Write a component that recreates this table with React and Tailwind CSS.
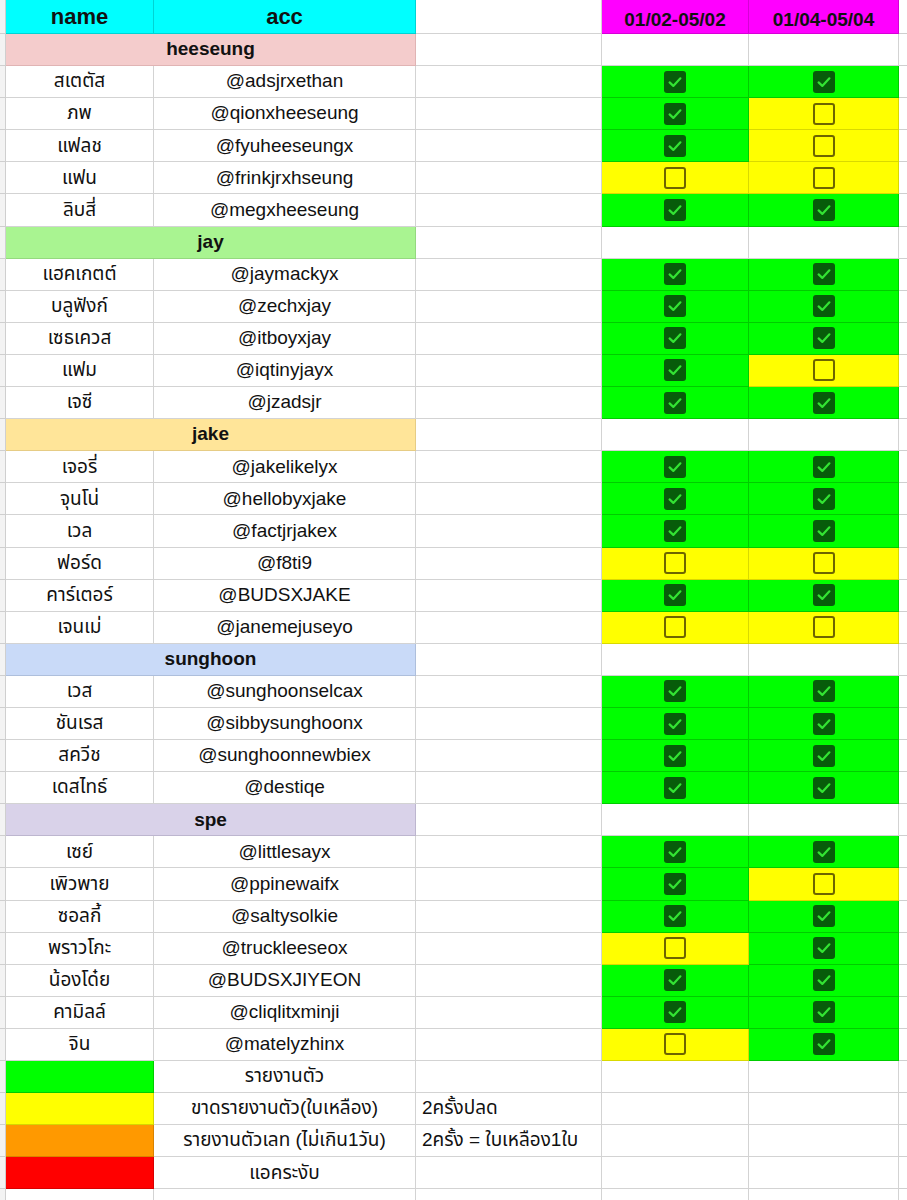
import React from 'react';

const groups = [
  {
    name: 'heeseung',
    bg: 'bg-[#f4cccc]',
    border: 'border-[#e0b4b4]',
    members: [
      ['สเตตัส', '@adsjrxethan', 1, 1],
      ['ภพ', '@qionxheeseung', 1, 0],
      ['แฟลช', '@fyuheeseungx', 1, 0],
      ['แฟน', '@frinkjrxhseung', 0, 0],
      ['ลิบสี่', '@megxheeseung', 1, 1],
    ],
  },
  {
    name: 'jay',
    bg: 'bg-[#a9f491]',
    border: 'border-[#94d97f]',
    members: [
      ['แฮคเกตต์', '@jaymackyx', 1, 1],
      ['บลูฟังก์', '@zechxjay', 1, 1],
      ['เซธเควส', '@itboyxjay', 1, 1],
      ['แฟม', '@iqtinyjayx', 1, 0],
      ['เจซี', '@jzadsjr', 1, 1],
    ],
  },
  {
    name: 'jake',
    bg: 'bg-[#ffe599]',
    border: 'border-[#e6cc85]',
    members: [
      ['เจอรี่', '@jakelikelyx', 1, 1],
      ['จุนโน่', '@hellobyxjake', 1, 1],
      ['เวล', '@factjrjakex', 1, 1],
      ['ฟอร์ด', '@f8ti9', 0, 0],
      ['คาร์เตอร์', '@BUDSXJAKE', 1, 1],
      ['เจนเม่', '@janemejuseyo', 0, 0],
    ],
  },
  {
    name: 'sunghoon',
    bg: 'bg-[#c9daf8]',
    border: 'border-[#aebfdc]',
    members: [
      ['เวส', '@sunghoonselcax', 1, 1],
      ['ชันเรส', '@sibbysunghoonx', 1, 1],
      ['สควีช', '@sunghoonnewbiex', 1, 1],
      ['เดสไทธ์', '@destiqe', 1, 1],
    ],
  },
  {
    name: 'spe',
    bg: 'bg-[#d9d2e9]',
    border: 'border-[#bdb6cf]',
    members: [
      ['เซย์', '@littlesayx', 1, 1],
      ['เพิวพาย', '@ppinewaifx', 1, 0],
      ['ซอลกี้', '@saltysolkie', 1, 1],
      ['พราวโกะ', '@truckleeseox', 0, 1],
      ['น้องโด๋ย', '@BUDSXJIYEON', 1, 1],
      ['คามิลล์', '@cliqlitxminji', 1, 1],
      ['จิน', '@matelyzhinx', 0, 1],
    ],
  },
];

const legend = [
  ['bg-[#00ff00] border-[#00cc00]', 'รายงานตัว', ''],
  ['bg-[#ffff00] border-[#d6d600]', 'ขาดรายงานตัว(ใบเหลือง)', '2ครั้งปลด'],
  ['bg-[#ff9900] border-[#d98200]', 'รายงานตัวเลท (ไม่เกิน1วัน)', '2ครั้ง = ใบเหลือง1ใบ'],
  ['bg-[#ff0000] border-[#d90000]', 'แอคระงับ', ''],
];

const font = { fontFamily: '"Liberation Sans", Arial, "Noto Sans Thai", "Noto Sans", "DejaVu Sans", sans-serif' };

const Check = ({ on }) =>
  on ? (
    <div className="w-[22px] h-[22px] rounded-[3px] bg-[#075c0a] flex items-center justify-center">
      <svg width="16" height="16" viewBox="0 0 16 16" fill="none">
        <path d="M2.6 8.4 L6.3 11.9 L13.4 4.3" stroke="#33e333" strokeWidth="2.2" strokeLinecap="round" strokeLinejoin="round" />
      </svg>
    </div>
  ) : (
    <div className="w-[22px] h-[22px] rounded-[3px] border-[2.5px] border-[#6e6500]"></div>
  );

const Row = ({ children, h = 'h-[32.1px]' }) => (
  <div className={`flex ${h}`}>
    <div className="w-[6px] shrink-0 bg-[#f3f3f3] border-r border-b border-[#cfcfcf]"></div>
    {children}
    <div className="flex-1 border-b border-[#cfcfcf]"></div>
  </div>
);

const Cell = ({ w, cls = 'border-[#d3d3d3]', children, align = 'justify-center' }) => (
  <div className={`${w} shrink-0 flex items-center ${align} border-r border-b ${cls}`}>{children}</div>
);

const StatusCell = ({ w, on }) => (
  <Cell w={w} cls={on ? 'bg-[#00ff00] border-[#00cc00]' : 'bg-[#ffff00] border-[#d9d900]'}>
    <Check on={on} />
  </Cell>
);

export default function App() {
  return (
    <div className="w-[907px] h-[1200px] overflow-hidden bg-white text-[#111]" style={font}>
      {/* header */}
      <Row h="h-[34px]">
        <Cell w="w-[148px]" cls="bg-[#00ffff] border-[#00d4d4]">
          <span className="text-[22px] font-bold">name</span>
        </Cell>
        <Cell w="w-[262px]" cls="bg-[#00ffff] border-[#00d4d4]">
          <span className="text-[22px] font-bold">acc</span>
        </Cell>
        <Cell w="w-[186px]" />
        <Cell w="w-[147px]" cls="bg-[#ff00ff] border-[#d600d6]">
          <span className="text-[19px] font-bold pt-[7px]">01/02-05/02</span>
        </Cell>
        <Cell w="w-[150px]" cls="bg-[#ff00ff] border-[#d600d6]">
          <span className="text-[19px] font-bold pt-[7px]">01/04-05/04</span>
        </Cell>
      </Row>

      {groups.map(g => (
        <React.Fragment key={g.name}>
          <Row>
            <Cell w="w-[410px]" cls={`${g.bg} ${g.border}`}>
              <span className="text-[19px] font-bold">{g.name}</span>
            </Cell>
            <Cell w="w-[186px]" />
            <Cell w="w-[147px]" />
            <Cell w="w-[150px]" />
          </Row>
          {g.members.map(([name, acc, a, b]) => (
            <Row key={acc}>
              <Cell w="w-[148px]">
                <span className="text-[19px]">{name}</span>
              </Cell>
              <Cell w="w-[262px]">
                <span className="text-[19px]">{acc}</span>
              </Cell>
              <Cell w="w-[186px]" />
              <StatusCell w="w-[147px]" on={a} />
              <StatusCell w="w-[150px]" on={b} />
            </Row>
          ))}
        </React.Fragment>
      ))}

      {legend.map(([color, label, note]) => (
        <Row key={label}>
          <Cell w="w-[148px]" cls={color} />
          <Cell w="w-[262px]">
            <span className="text-[19px]">{label}</span>
          </Cell>
          <Cell w="w-[186px]" align="justify-start">
            <span className="text-[19px] pl-[6px] whitespace-nowrap">{note}</span>
          </Cell>
          <Cell w="w-[147px]" />
          <Cell w="w-[150px]" />
        </Row>
      ))}

      <Row>
        <Cell w="w-[148px]" />
        <Cell w="w-[262px]" />
        <Cell w="w-[186px]" />
        <Cell w="w-[147px]" />
        <Cell w="w-[150px]" />
      </Row>
    </div>
  );
}
